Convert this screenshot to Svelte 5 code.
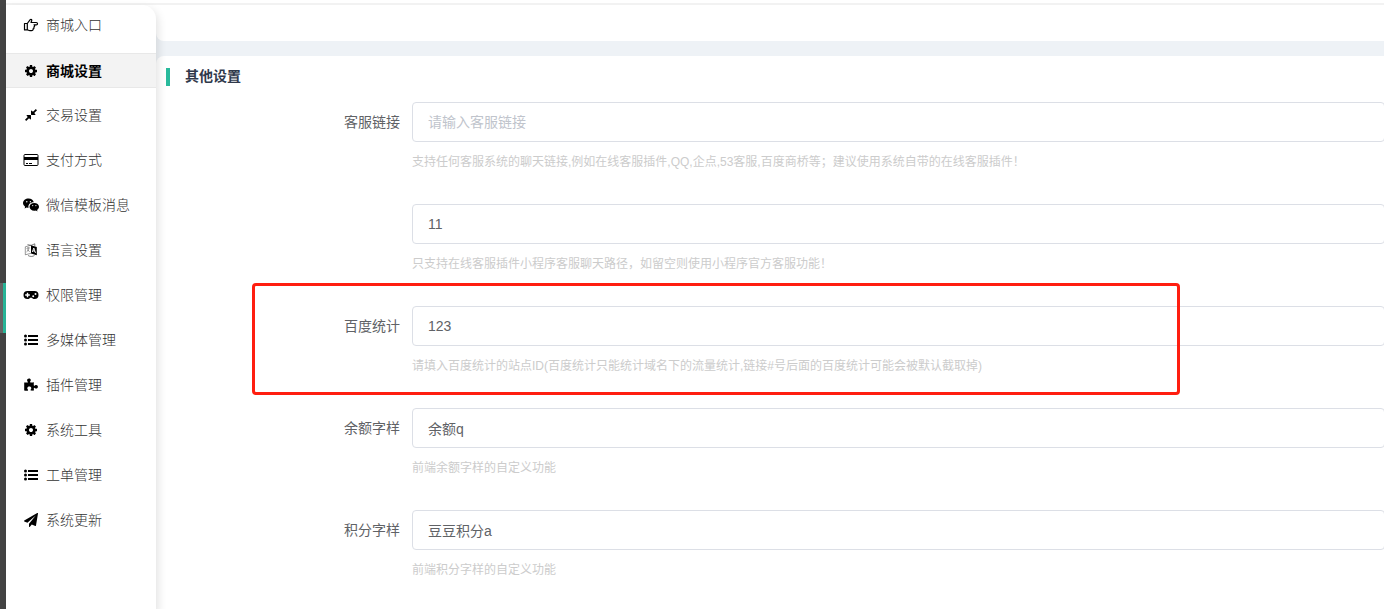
<script lang="ts">
	// Shop settings page: narrow rail, side menu and the "other settings" form.
	const menu = [
		{ icon: 'hand', label: '商城入口' },
		{ icon: 'cog', label: '商城设置', active: true },
		{ icon: 'compress', label: '交易设置' },
		{ icon: 'card', label: '支付方式' },
		{ icon: 'wechat', label: '微信模板消息' },
		{ icon: 'language', label: '语言设置' },
		{ icon: 'gamepad', label: '权限管理' },
		{ icon: 'list', label: '多媒体管理' },
		{ icon: 'puzzle', label: '插件管理' },
		{ icon: 'cog', label: '系统工具' },
		{ icon: 'list', label: '工单管理' },
		{ icon: 'plane', label: '系统更新' }
	];

	let fields = $state([
		{
			id: 'service-link',
			label: '客服链接',
			value: '',
			placeholder: '请输入客服链接',
			help: '支持任何客服系统的聊天链接,例如在线客服插件,QQ,企点,53客服,百度商桥等；建议使用系统自带的在线客服插件！'
		},
		{
			id: 'service-mini',
			label: '',
			value: '11',
			help: '只支持在线客服插件小程序客服聊天路径，如留空则使用小程序官方客服功能！'
		},
		{
			id: 'baidu',
			label: '百度统计',
			value: '123',
			help: '请填入百度统计的站点ID(百度统计只能统计域名下的流量统计,链接#号后面的百度统计可能会被默认截取掉)',
			marked: true
		},
		{ id: 'balance', label: '余额字样', value: '余额q', help: '前端余额字样的自定义功能' },
		{ id: 'points', label: '积分字样', value: '豆豆积分a', help: '前端积分字样的自定义功能' }
	]);
</script>

{#snippet icon(name: string)}
	{#if name === 'hand'}
		<svg class="icon" viewBox="0 0 16 16" aria-hidden="true">
			<path
				d="M1.5 6.5h2.8L7.2 2.6c.9-.7 1.9.2 1.5 1.2L8 5.5h5.3c1.6 0 1.6 2.3 0 2.3H11c1 .8.7 1.9-.2 2.2.5.8.1 1.7-.7 1.9.2 1-.5 1.8-1.5 1.8H6.8c-1 0-1.6-.8-2.500-.8H1.500zM4.300 6.500v6"
				fill="none"
				stroke="currentColor"
				stroke-width="1.2"
				stroke-linejoin="round"
			/>
		</svg>
	{:else if name === 'cog'}
		<svg class="icon" viewBox="-128 -128 2048 2048" aria-hidden="true">
			<path
				d="M1152 896q0-106-75-181t-181-75-181 75-75 181 75 181 181 75 181-75 75-181zm512-109v222q0 12-8 23t-20 13l-185 28q-19 54-39 91 35 50 107 138 10 12 10 25t-9 23q-27 37-99 108t-94 71q-12 0-26-9l-138-108q-44 23-91 38-16 136-29 186-7 28-36 28h-222q-14 0-24.5-8.5t-11.5-21.5l-28-184q-49-16-90-37l-141 107q-10 9-25 9-14 0-25-11-126-114-165-168-7-10-7-23 0-12 8-23 15-21 51-66.5t54-70.5q-27-50-41-99l-183-27q-13-2-21-12.5t-8-23.5v-222q0-12 8-23t19-13l186-28q14-46 39-92-40-57-107-138-10-12-10-24 0-10 9-23 26-36 98.5-107.5t94.5-71.5q13 0 26 10l138 107q44-23 91-38 16-136 29-186 7-28 36-28h222q14 0 24.5 8.5t11.5 21.5l28 184q49 16 90 37l142-107q9-9 24-9 13 0 25 10 129 119 165 170 7 8 7 22 0 12-8 23-15 21-51 66.5t-54 70.5q26 50 41 98l183 28q13 2 21 12.5t8 23.5z"
			/>
		</svg>
	{:else if name === 'compress'}
		<svg class="icon" viewBox="-128 -128 2048 2048" aria-hidden="true">
			<path
				d="M896 960v448q0 26-19 45t-45 19-45-19l-144-144-332 332q-10 10-23 10t-23-10l-114-114q-10-10-10-23t10-23l332-332-144-144q-19-19-19-45t19-45 45-19h448q26 0 45 19t19 45zm755-672q0 13-10 23l-332 332 144 144q19 19 19 45t-19 45-45 19h-448q-26 0-45-19t-19-45v-448q0-26 19-45t45-19 45 19l144 144 332-332q10-10 23-10t23 10l114 114q10 10 10 23z"
			/>
		</svg>
	{:else if name === 'card'}
		<svg class="icon" viewBox="0 0 16 16" aria-hidden="true">
			<rect x="1" y="2.5" width="14" height="11" rx="1" fill="none" stroke="currentColor" />
			<path d="M1 5h14v3H1zM3 11h2v1H3zM6 11h3v1H6z" />
		</svg>
	{:else if name === 'wechat'}
		<svg class="icon" viewBox="0 0 16 16" aria-hidden="true">
			<path d="M5.6 1.5C2.5 1.5 0 3.5 0 6.1c0 1.5.8 2.7 2.1 3.600L1.600 11.500l2-1.100c.7.2 1.300.3 2 .3-.9-3.200 1.900-5.700 5.200-5.500C10.300 3 8.200 1.500 5.600 1.500z" />
			<path d="M16 9.800c0-2.200-2.100-3.900-4.700-3.900S6.500 7.600 6.500 9.800s2.100 4 4.800 4c.6 0 1.100-.1 1.600-.3l1.600.9-.4-1.500c1.100-.8 1.900-1.900 1.900-3.100z" />
			<g fill="#fff">
				<circle cx="3.8" cy="4.7" r=".7" />
				<circle cx="7.4" cy="4.7" r=".7" />
				<circle cx="9.7" cy="8.6" r=".6" />
				<circle cx="12.9" cy="8.6" r=".6" />
			</g>
		</svg>
	{:else if name === 'language'}
		<svg class="icon" viewBox="0 0 16 16" aria-hidden="true">
			<path d="M8 3.2l5.800 1.700v8.300L8 11.500z" />
			<path
				d="M9.300 10l1.500-4 1.700 5M9.900 8.700l2.100.6"
				fill="none"
				stroke="#fff"
				stroke-width=".9"
			/>
			<path
				d="M8 3.200L2.300 4.800v8L8 11.300M3.500 6.500l3.200-.8M5 5v1.300M6 6.200c-.4 1.800-1.300 3-2.500 3.800M4 7.500l2.700 2.200"
				fill="none"
				stroke="currentColor"
				stroke-width=".4"
			/>
			<path
				d="M4.500 2.600L8 3.400l3.800-1.600v2.400M5 13.500c2 1.300 4.800 1.200 6.500 0"
				fill="none"
				stroke="currentColor"
				stroke-width=".5"
			/>
		</svg>
	{:else if name === 'gamepad'}
		<svg class="icon" viewBox="0 0 16 16" aria-hidden="true">
			<path
				fill-rule="evenodd"
				d="M4.500 4h7a4 4 0 0 1 0 8c-1.200 0-2-.4-2.700-1.200H7.200C6.500 11.600 5.700 12 4.500 12a4 4 0 0 1 0-8zM3.800 5.700v1.600H2.200v1.400h1.600v1.600h1.400V8.700h1.600V7.300H5.200V5.700zM10.200 8.200a1 1 0 1 0 0 2 1 1 0 0 0 0-2zM12.500 5.900a1 1 0 1 0 0 2 1 1 0 0 0 0-2z"
			/>
		</svg>
	{:else if name === 'list'}
		<svg class="icon" viewBox="0 0 16 16" aria-hidden="true">
			<path d="M5 3h10v2H5zM5 7h10v2H5zM5 11h10v2H5z" />
			<circle cx="2.5" cy="4" r="1.5" />
			<circle cx="2.5" cy="8" r="1.5" />
			<circle cx="2.5" cy="12" r="1.5" />
		</svg>
	{:else if name === 'puzzle'}
		<svg class="icon" viewBox="0 0 16 16" aria-hidden="true">
			<path
				d="M1.200 5.400c1.400.3 3.700.3 3.700-.2 0-.6-.8-1-.8-2 0-1.100.8-1.800 1.900-1.800s1.800.7 1.800 1.700-.8 1.500-.8 2c0 .6 2 .4 3.900.2-.2 1.500-.3 3.500.3 3.500.5 0 .9-.8 2-.8 1 0 1.700.8 1.700 1.800s-.7 1.800-1.700 1.800-1.400-.8-2-.8c-.5 0-.4 1.100-.2 2.700-1.800.2-3.500.3-3.500-.4 0-.5.8-1 .8-1.900S7.400 9.600 6.300 9.600s-2 .7-2 1.700.8 1.300.8 1.900c0 .8-2.500.6-3.900.3z"
			/>
		</svg>
	{:else}
		<svg class="icon" viewBox="-128 -128 2048 2048" aria-hidden="true">
			<path
				d="M1764 11q33 24 27 64l-256 1536q-5 29-32 45-14 8-31 8-11 0-24-5l-453-185-242 295q-18 23-49 23-13 0-22-4-19-7-30.500-23.500t-11.500-36.500v-349l864-1059-1069 925-395-162q-37-14-40-55-2-40 32-59l1664-960q15-9 32-9 20 0 36 11z"
			/>
		</svg>
	{/if}
{/snippet}

<div class="page">
	<div class="rail"><span class="rail-active"></span></div>
	<div class="body">
		<div class="topline"></div>
		<div class="columns">
			<nav class="menu">
				{#each menu as item}
					<a href="#menu" class="menu-item" class:active={item.active}>
						{@render icon(item.icon)}
						<span>{item.label}</span>
					</a>
				{/each}
			</nav>
			<main class="content">
				<div class="card tabs"></div>
				<section class="card settings">
					<h2>其他设置</h2>
					<form>
						{#each fields as field (field.id)}
							<div class="row">
								<label for={field.id}>{field.label}</label>
								<div class="control">
									<input
										id={field.id}
										type="text"
										placeholder={field.placeholder}
										aria-label={field.label || '小程序客服链接'}
										bind:value={field.value}
									/>
									<p>{field.help}</p>
								</div>
								{#if field.marked}
									<div class="marker"></div>
								{/if}
							</div>
						{/each}
					</form>
				</section>
			</main>
		</div>
	</div>
</div>

<style>
	:global(body) {
		background: #fff;
		overflow: hidden;
	}
	.page {
		display: flex;
		min-height: 100vh;
		font-family: 'Liberation Sans', 'Noto Sans CJK SC', sans-serif;
		font-size: 14px;
		color: #606266;
	}

	/* Rail */
	.rail {
		flex: none;
		width: 6px;
		background: #444;
		position: relative;
	}
	.rail-active {
		position: absolute;
		top: 283px;
		right: 0;
		width: 3px;
		height: 50px;
		border-left: 3px solid #666;
		background: #29ba9c;
	}

	.body {
		flex: 1;
		min-width: 0;
		display: flex;
		flex-direction: column;
	}
	.topline {
		height: 3px;
		border-bottom: 2px solid #f2f2f2;
	}
	.columns {
		flex: 1;
		display: flex;
	}

	/* Side menu */
	.menu {
		flex: none;
		display: flex;
		flex-direction: column;
		gap: 10px;
		box-sizing: border-box;
		width: 150px;
		padding-top: 3px;
		background: #fff;
		border-top-right-radius: 14px;
		box-shadow: 2px 4px 10px rgba(0, 0, 0, 0.12);
		position: relative;
		z-index: 1;
	}
	.menu-item {
		display: flex;
		align-items: center;
		gap: 7px;
		box-sizing: border-box;
		height: 35px;
		padding: 0 0 2px 17px;
		border: solid transparent;
		border-width: 1px 0;
		font-weight: 300;
		color: #333;
		text-decoration: none;
	}
	.menu-item span {
		padding-bottom: 2px;
	}
	.menu-item.active {
		padding-bottom: 0;
		background: #f3f3f3;
		border-color: #e8e8e8;
		font-weight: 700;
		color: #000;
	}
	.icon {
		flex: none;
		width: 16px;
		height: 16px;
		color: #000;
		fill: currentColor;
	}

	/* Content */
	.content {
		flex: 1;
		min-width: 0;
		display: flex;
		flex-direction: column;
		gap: 15px;
		background: #eef2f6;
		overflow: hidden;
	}
	.card {
		background: #fff;
	}
	.tabs {
		height: 36px;
		border-bottom-left-radius: 8px;
	}
	.settings {
		flex: 1;
		padding: 12px 0 0 10px;
		border-top-left-radius: 8px;
	}
	h2 {
		display: flex;
		gap: 15px;
		margin: 0 0 16px;
		font-size: 14px;
		line-height: 16px;
		color: #30394b;
	}
	h2::before {
		content: '';
		width: 4px;
		height: 18px;
		background: #29ba9c;
	}
	form {
		margin-right: -1px;
	}
	.row {
		display: grid;
		grid-template-columns: 234px 1fr;
		column-gap: 12px;
		height: 102px;
		position: relative;
	}
	label {
		text-align: right;
		line-height: 40px;
	}
	input {
		display: block;
		box-sizing: border-box;
		width: 100%;
		height: 40px;
		padding: 0 15px;
		border: 1px solid #dcdfe6;
		border-radius: 4px;
		background: #fff;
		font: inherit;
		color: #606266;
		outline: none;
	}
	input::placeholder {
		color: #c0c4cc;
		opacity: 1;
	}
	p {
		margin: 0;
		font-size: 12px;
		line-height: 40px;
		color: #ccc;
	}
	/* Red frame drawn over the highlighted row */
	.marker {
		position: absolute;
		top: -23px;
		left: 86px;
		box-sizing: border-box;
		width: 928px;
		height: 112px;
		border: 3px solid #ff1e10;
		border-radius: 4px;
		pointer-events: none;
	}
</style>
